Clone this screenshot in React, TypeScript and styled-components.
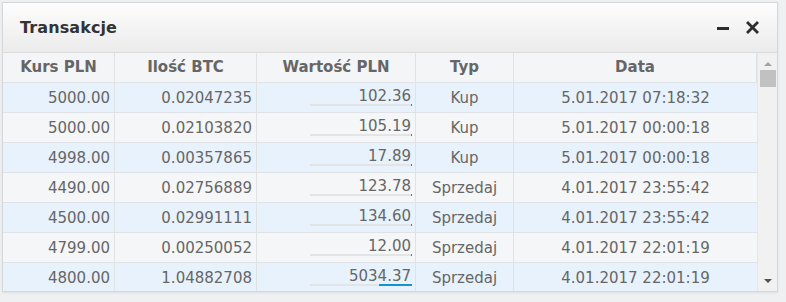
import React from "react";
import styled, { createGlobalStyle } from "styled-components";

const Global = createGlobalStyle`
  html, body { margin: 0; padding: 0; background: #eef0f2; }
  body { font-family: "DejaVu Sans", Verdana, sans-serif; }
`;

const Page = styled.div`
  padding: 2px 0 0 2px;
  width: 786px;
  height: 302px;
  box-sizing: border-box;
`;

const Panel = styled.div`
  width: 776px;
  border: 1px solid #d6d8da;
  background: #fff;
  box-sizing: border-box;
  box-shadow: 0 1px 2px rgba(0, 0, 0, 0.08);
`;

const TitleBar = styled.div`
  height: 49px;
  display: flex;
  align-items: center;
  justify-content: space-between;
  padding: 0 18px 0 17px;
  background: linear-gradient(#fdfdfd, #ebebeb);
  border-bottom: 1px solid #dcdcdc;
`;

const Title = styled.div`
  font-size: 16px;
  font-weight: bold;
  color: #333;
  letter-spacing: 0.1px;
`;

const Tools = styled.div`
  display: flex;
  align-items: center;
  gap: 17px;
`;

const Body = styled.div`
  display: flex;
  height: 238px;
  overflow: hidden;
`;

const Grid = styled.div`
  flex: 1;
  display: grid;
  grid-template-columns: 112px 142px 159px 98px 243px;
  grid-auto-rows: 30px;
  align-content: start;
`;

const HeadCell = styled.div`
  background: #f4f5f7;
  color: #666;
  font-weight: bold;
  font-size: 15px;
  display: flex;
  align-items: center;
  justify-content: center;
  border-right: 1px solid #e0e3e6;
  border-bottom: 1px solid #dfe3e7;
  padding-bottom: 1px;
  &:last-child { border-right: none; }
`;

const Cell = styled.div<{ $odd: boolean; $align: "right" | "center"; $last?: boolean }>`
  position: relative;
  background: ${(p) => (p.$odd ? "#e8f2fd" : "#f5f6f8")};
  color: #666;
  font-size: 15px;
  display: flex;
  align-items: center;
  justify-content: ${(p) => (p.$align === "right" ? "flex-end" : "center")};
  padding: 0 ${(p) => (p.$align === "right" ? "4px" : "0")} 0 0;
  border-right: ${(p) => (p.$last ? "none" : "1px solid #e0e3e6")};
  border-bottom: 1px solid #dfe3e7;
  box-sizing: border-box;
`;

const Value = styled.span`
  position: relative;
  top: -2px;
`;

const Track = styled.div`
  position: absolute;
  right: 3px;
  bottom: 6px;
  width: 102px;
  height: 2px;
  background: #e2e4e6;
  display: flex;
  justify-content: flex-end;
`;

const Fill = styled.div`
  height: 100%;
  background: #1592d0;
`;

const Scroll = styled.div`
  width: 20px;
  background: #f1f1f1;
  border-left: 1px solid #e6e6e6;
  display: flex;
  flex-direction: column;
  align-items: center;
  padding-top: 9px;
`;

const Thumb = styled.div`
  width: 16px;
  height: 17px;
  background: #c1c1c1;
  margin-top: 4px;
`;

const Spacer = styled.div`
  flex: 1;
`;

const Arrow = styled.div<{ $down?: boolean }>`
  width: 0;
  height: 0;
  border-left: 4px solid transparent;
  border-right: 4px solid transparent;
  ${(p) =>
    p.$down
      ? "border-top: 4px solid #505050; margin-bottom: 8px;"
      : "border-bottom: 4px solid #a3a3a3;"}
`;

const rows = [
  ["5000.00", "0.02047235", 102.36, "Kup", "5.01.2017 07:18:32"],
  ["5000.00", "0.02103820", 105.19, "Kup", "5.01.2017 00:00:18"],
  ["4998.00", "0.00357865", 17.89, "Kup", "5.01.2017 00:00:18"],
  ["4490.00", "0.02756889", 123.78, "Sprzedaj", "4.01.2017 23:55:42"],
  ["4500.00", "0.02991111", 134.6, "Sprzedaj", "4.01.2017 23:55:42"],
  ["4799.00", "0.00250052", 12.0, "Sprzedaj", "4.01.2017 22:01:19"],
  ["4800.00", "1.04882708", 5034.37, "Sprzedaj", "4.01.2017 22:01:19"],
] as const;

const MAX = 15600;

export default function App() {
  return (
    <>
      <Global />
      <Page>
        <Panel>
          <TitleBar>
            <Title>Transakcje</Title>
            <Tools>
              <svg width="12" height="12" viewBox="0 0 12 12">
                <rect x="0" y="5" width="12" height="3" fill="#2d2d2d" />
              </svg>
              <svg width="13" height="13" viewBox="0 0 13 13">
                <path d="M2 2 L11 11 M11 2 L2 11" stroke="#2d2d2d" strokeWidth="2.8" strokeLinecap="square" />
              </svg>
            </Tools>
          </TitleBar>
          <Body>
            <Grid>
              <HeadCell>Kurs PLN</HeadCell>
              <HeadCell>Ilość BTC</HeadCell>
              <HeadCell>Wartość PLN</HeadCell>
              <HeadCell>Typ</HeadCell>
              <HeadCell>Data</HeadCell>
              {rows.map((r, i) => {
                const odd = i % 2 === 0;
                const pct = Math.max(1, (r[2] / MAX) * 102);
                return (
                  <React.Fragment key={i}>
                    <Cell $odd={odd} $align="right">{r[0]}</Cell>
                    <Cell $odd={odd} $align="right">{r[1]}</Cell>
                    <Cell $odd={odd} $align="right">
                      <Value>{r[2].toFixed(2)}</Value>
                      <Track>
                        <Fill style={{ width: `${pct}px` }} />
                      </Track>
                    </Cell>
                    <Cell $odd={odd} $align="center">{r[3]}</Cell>
                    <Cell $odd={odd} $align="center" $last>{r[4]}</Cell>
                  </React.Fragment>
                );
              })}
            </Grid>
            <Scroll>
              <Arrow />
              <Thumb />
              <Spacer />
              <Arrow $down />
            </Scroll>
          </Body>
        </Panel>
      </Page>
    </>
  );
}
